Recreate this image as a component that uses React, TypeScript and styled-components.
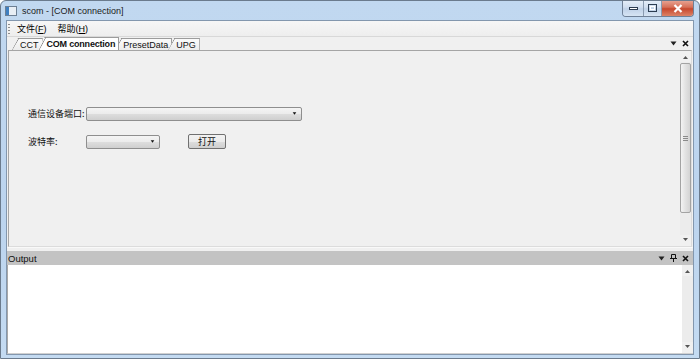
import React from "react";
import styled, { createGlobalStyle } from "styled-components";

const GlobalStyle = createGlobalStyle`
  html, body {
    margin: 0;
    padding: 0;
    width: 700px;
    height: 359px;
    overflow: hidden;
    background: #ffffff;
  }
`;

const UI_FONT = `"Liberation Sans", "Noto Sans CJK SC", sans-serif`;

const Window = styled.div`
  width: 700px;
  height: 359px;
  box-sizing: border-box;
  display: flex;
  flex-direction: column;
  background: linear-gradient(to bottom, #c1d8f0 0%, #bcd4ee 60%, #c4dbf2 100%);
  border: 1px solid #6b7b8d;
  border-radius: 6px 6px 0 0;
  font-family: ${UI_FONT};
  overflow: hidden;
`;

const TitleBar = styled.div`
  height: 19px;
  display: flex;
  align-items: center;
  padding-left: 4px;
  position: relative;
`;

const AppIcon = styled.div`
  width: 10px;
  height: 8px;
  margin-right: 5px;
  border: 1px solid #6d7f94;
  background: linear-gradient(to right, #3f7fc0 0 3px, #e8eef5 3px);
`;

const TitleText = styled.span`
  font-size: 9px;
  color: #1a1a1a;
`;

const CaptionButtons = styled.div`
  position: absolute;
  top: -1px;
  right: 5px;
  display: flex;
  border: 1px solid #6f8096;
  border-top: none;
  border-radius: 0 0 4px 4px;
  overflow: hidden;
`;

const CaptionButton = styled.div<{ $w: number; $close?: boolean }>`
  width: ${(p) => p.$w}px;
  height: 16px;
  display: flex;
  align-items: center;
  justify-content: center;
  background: ${(p) =>
    p.$close
      ? "linear-gradient(to bottom, #e9a898 0%, #d67058 45%, #c7482e 55%, #dc8266 100%)"
      : "linear-gradient(to bottom, #e6eff9 0%, #d0deef 45%, #bfd1e7 55%, #d6e4f3 100%)"};
  border-left: 1px solid #8a9bb0;
  &:first-child {
    border-left: none;
  }
`;

const Client = styled.div`
  flex: 1;
  margin: 0 5px 3px 5px;
  display: flex;
  flex-direction: column;
  background: #f0f0f0;
  border: 1px solid #8397ae;
`;

const MenuBar = styled.div`
  height: 16px;
  display: flex;
  align-items: center;
  padding-left: 1px;
  background: linear-gradient(to bottom, #f6f6f6, #eeeeee);
  border-bottom: 1px solid #d8d8d8;
  box-sizing: border-box;
`;

const Grip = styled.div`
  width: 2px;
  height: 10px;
  margin-right: 5px;
  background: repeating-linear-gradient(to bottom, #8c8c8c 0 1px, transparent 1px 3px);
`;

const MenuItem = styled.span`
  font-size: 9px;
  color: #000;
  padding: 0 2px;
  margin-right: 7px;
  u {
    text-decoration: underline;
  }
`;

const TabStrip = styled.div`
  height: 13px;
  display: flex;
  align-items: flex-end;
  padding-left: 5px;
  position: relative;
`;

const Tab = styled.div<{ $active?: boolean }>`
  position: relative;
  height: ${(p) => (p.$active ? 13 : 12)}px;
  box-sizing: border-box;
  padding: 0 3px 0 8px;
  margin-left: -4px;
  font-size: 9px;
  line-height: 12px;
  font-weight: ${(p) => (p.$active ? 700 : 400)};
  letter-spacing: ${(p) => (p.$active ? "-0.2px" : "0")};
  color: #111;
  background: ${(p) => (p.$active ? "#ffffff" : "linear-gradient(to bottom, #fbfbfb, #ececec)")};
  border-top: 1px solid #9c9c9c;
  border-right: 1px solid #9c9c9c;
  clip-path: polygon(6px 0, 100% 0, 100% 100%, 0 100%);
  z-index: ${(p) => (p.$active ? 2 : 1)};
  &:first-child {
    margin-left: 0;
  }
  &::before {
    content: "";
    position: absolute;
    left: 0;
    top: -1px;
    width: 7px;
    height: calc(100% + 1px);
    background: linear-gradient(
      to bottom right,
      transparent calc(50% - 0.7px),
      #8a8a8a 50%,
      transparent calc(50% + 0.7px)
    );
  }
`;

const StripControls = styled.div`
  margin-left: auto;
  margin-right: 4px;
  height: 13px;
  display: flex;
  align-items: center;
  gap: 5px;
`;

const Panel = styled.div`
  flex: 1;
  margin: 0 1px;
  display: flex;
  border: 1px solid #a5a5a5;
  border-right-color: #dcdcdc;
  border-bottom-color: #dcdcdc;
  background: #f0f0f0;
`;

const FormArea = styled.div`
  flex: 1;
  padding: 55px 0 0 19px;
  display: flex;
  flex-direction: column;
  gap: 13px;
`;

const FormRow = styled.div`
  display: flex;
  align-items: center;
  height: 15px;
`;

const Label = styled.span`
  width: 58px;
  flex-shrink: 0;
  white-space: nowrap;
  font-size: 9px;
  font-family: "Noto Sans CJK SC", sans-serif;
  color: #111;
`;

const Combo = styled.div<{ $w: number }>`
  width: ${(p) => p.$w}px;
  height: 14px;
  box-sizing: border-box;
  border: 1px solid #8e8e8e;
  border-radius: 2px;
  background: linear-gradient(to bottom, #f4f4f4 0%, #ebebeb 50%, #dddddd 51%, #cfcfcf 100%);
  display: flex;
  align-items: center;
  justify-content: flex-end;
  padding-right: 4px;
`;

const PushButton = styled.div`
  margin-left: 28px;
  width: 38px;
  height: 15px;
  box-sizing: border-box;
  border: 1px solid #707070;
  border-radius: 2px;
  background: linear-gradient(to bottom, #f2f2f2 0%, #ebebeb 50%, #dddddd 51%, #cfcfcf 100%);
  display: flex;
  align-items: center;
  justify-content: center;
  font-size: 9px;
  font-family: "Noto Sans CJK SC", sans-serif;
  color: #111;
`;

const ScrollBar = styled.div`
  width: 11px;
  display: flex;
  flex-direction: column;
  align-items: center;
  background: #f0f0f0;
  padding: 2px 0;
  box-sizing: border-box;
`;

const ArrowBox = styled.div`
  height: 9px;
  width: 11px;
  display: flex;
  align-items: center;
  justify-content: center;
`;

const Track = styled.div`
  flex: 1;
  width: 11px;
  display: flex;
  flex-direction: column;
  padding: 1px 0;
  box-sizing: border-box;
  background: #ececec;
`;

const Thumb = styled.div<{ $h: number }>`
  height: ${(p) => p.$h}px;
  box-sizing: border-box;
  border: 1px solid #a3a3a3;
  border-radius: 2px;
  background: linear-gradient(to right, #f3f3f3, #e2e2e2 50%, #d3d3d3);
  display: flex;
  align-items: center;
  justify-content: center;
`;

const GripLines = styled.div`
  width: 5px;
  height: 5px;
  background: repeating-linear-gradient(to bottom, #8a8a8a 0 1px, transparent 1px 2px);
`;

const DockGap = styled.div`
  height: 4px;
  background: #f0f0f0;
  border-top: 1px solid #f9f9f9;
  box-sizing: border-box;
`;

const DockTitle = styled.div`
  height: 14px;
  display: flex;
  align-items: center;
  padding-left: 1px;
  background: #c3c3c3;
  font-size: 9.5px;
  color: #111;
`;

const DockBody = styled.div`
  height: 88px;
  display: flex;
  background: #ffffff;
  border-left: 1px solid #a8a8a8;
  border-bottom: 1px solid #d0d0d0;
`;

const OutputText = styled.div`
  flex: 1;
`;

const Tri = ({ up = false, size = 5, color = "#222" }: { up?: boolean; size?: number; color?: string }) => (
  <svg width={size + 2} height={size} viewBox="0 0 7 5">
    <path d={up ? "M0.5 4.5 L3.5 0.5 L6.5 4.5 Z" : "M0.5 0.5 L6.5 0.5 L3.5 4.5 Z"} fill={color} />
  </svg>
);

const SmallArrow = ({ up = false }: { up?: boolean }) => (
  <svg width="5" height="3" viewBox="0 0 5 3">
    <path d={up ? "M0 3 L2.5 0 L5 3 Z" : "M0 0 L5 0 L2.5 3 Z"} fill="#555" />
  </svg>
);

const CloseGlyph = ({ size = 7 }: { size?: number }) => (
  <svg width={size} height={size} viewBox="0 0 7 7">
    <path d="M1 1 L6 6 M6 1 L1 6" stroke="#111" strokeWidth="1.6" />
  </svg>
);

const PinGlyph = () => (
  <svg width="7" height="8" viewBox="0 0 7 8">
    <path d="M1.5 0.5 H5.5 V4.5 H1.5 Z M0 4.5 H7 M3.5 4.5 V8" stroke="#111" strokeWidth="1" fill="none" />
  </svg>
);

const VScroll = ({ thumb }: { thumb?: number }) => (
  <ScrollBar>
    <ArrowBox>
      <SmallArrow up />
    </ArrowBox>
    <Track>
      {thumb ? (
        <Thumb $h={thumb}>
          <GripLines />
        </Thumb>
      ) : null}
    </Track>
    <ArrowBox>
      <SmallArrow />
    </ArrowBox>
  </ScrollBar>
);

export default function App() {
  return (
    <>
      <GlobalStyle />
      <Window>
        <TitleBar>
          <AppIcon />
          <TitleText>scom - [COM connection]</TitleText>
          <CaptionButtons>
            <CaptionButton $w={20}>
              <svg width="9" height="3" viewBox="0 0 9 3">
                <rect x="0.5" y="0.5" width="8" height="2" fill="#fff" stroke="#2c3d52" strokeWidth="1" />
              </svg>
            </CaptionButton>
            <CaptionButton $w={17}>
              <svg width="9" height="8" viewBox="0 0 9 8">
                <rect x="0.5" y="0.5" width="8" height="7" fill="none" stroke="#2c3d52" strokeWidth="1" />
                <rect x="2.5" y="2.5" width="4" height="3" fill="none" stroke="#ffffff" strokeWidth="1" />
              </svg>
            </CaptionButton>
            <CaptionButton $w={31} $close>
              <svg width="10" height="9" viewBox="0 0 10 9">
                <path d="M1.5 1 L8.5 8 M8.5 1 L1.5 8" stroke="#ffffff" strokeWidth="2.2" />
              </svg>
            </CaptionButton>
          </CaptionButtons>
        </TitleBar>

        <Client>
          <MenuBar>
            <Grip />
            <MenuItem>
              文件(<u>F</u>)
            </MenuItem>
            <MenuItem>
              帮助(<u>H</u>)
            </MenuItem>
          </MenuBar>

          <TabStrip>
            <Tab>CCT</Tab>
            <Tab $active>COM connection</Tab>
            <Tab>PresetData</Tab>
            <Tab>UPG</Tab>
            <StripControls>
              <Tri />
              <CloseGlyph />
            </StripControls>
          </TabStrip>

          <Panel>
            <FormArea>
              <FormRow>
                <Label>通信设备端口:</Label>
                <Combo $w={216}>
                  <Tri size={3} color="#111" />
                </Combo>
              </FormRow>
              <FormRow>
                <Label>波特率:</Label>
                <Combo $w={74}>
                  <Tri size={3} color="#111" />
                </Combo>
                <PushButton>打开</PushButton>
              </FormRow>
            </FormArea>
            <VScroll thumb={150} />
          </Panel>

          <DockGap />
          <DockTitle>
            Output
            <StripControls>
              <Tri />
              <PinGlyph />
              <CloseGlyph />
            </StripControls>
          </DockTitle>
          <DockBody>
            <OutputText />
            <VScroll />
          </DockBody>
        </Client>
      </Window>
    </>
  );
}
